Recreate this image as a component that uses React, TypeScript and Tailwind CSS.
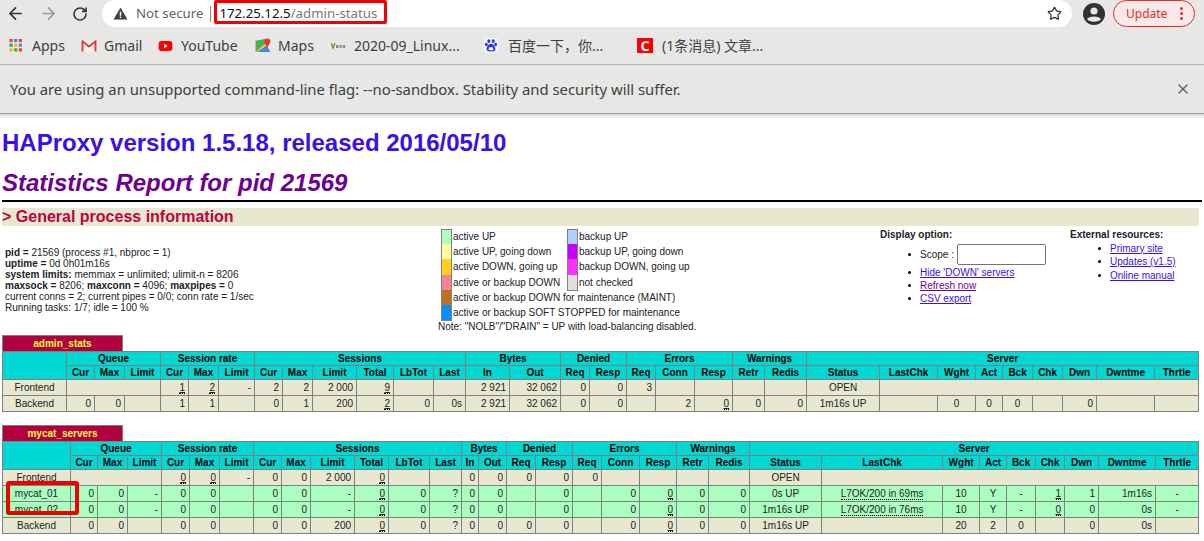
import { ArrowLeft, ArrowRight, RotateCw, Star, X } from 'lucide-react'

type Cell = string | { span: number }

const widths1 = [64, 28, 30, 36, 28, 30, 36, 28, 30, 44, 37, 40, 32, 44, 51, 29, 37, 29, 39, 38, 32, 42, 73, 58, 38, 27, 30, 30, 34, 58, 44]
const widths2 = [68, 27, 30, 34, 28, 30, 34, 28, 29, 44, 34, 41, 32, 17, 28, 29, 37, 29, 38, 37, 32, 41, 72, 121, 37, 27, 29, 29, 34, 57, 43]

const groups = [
  ['Queue', 3],
  ['Session rate', 3],
  ['Sessions', 6],
  ['Bytes', 2],
  ['Denied', 2],
  ['Errors', 3],
  ['Warnings', 2],
  ['Server', 9],
] as const

const headers = ['Cur', 'Max', 'Limit', 'Cur', 'Max', 'Limit', 'Cur', 'Max', 'Limit', 'Total', 'LbTot', 'Last', 'In', 'Out', 'Req', 'Resp', 'Req', 'Conn', 'Resp', 'Retr', 'Redis', 'Status', 'LastChk', 'Wght', 'Act', 'Bck', 'Chk', 'Dwn', 'Dwntme', 'Thrtle']

// "_" prefix = value with a tooltip (underlined in the page), "~" = dotted only
const adminRows: { cells: Cell[]; up?: boolean }[] = [
  { cells: ['Frontend', { span: 3 }, '_1', '_2', '-', '2', '2', '2 000', '_9', '', '', '2 921', '32 062', '0', '0', '3', '', '', '', '', 'OPEN', { span: 8 }] },
  { cells: ['Backend', '0', '0', '', '1', '1', '', '0', '1', '200', '_2', '0', '0s', '2 921', '32 062', '0', '0', '', '2', '_0', '0', '0', '1m16s UP', '', '0', '0', '0', '', '0', '', ''] },
]

const mycatRows: { cells: Cell[]; up?: boolean }[] = [
  { cells: ['Frontend', { span: 3 }, '_0', '_0', '-', '0', '0', '2 000', '_0', '', '', '0', '0', '0', '0', '0', '', '', '', '', 'OPEN', { span: 8 }] },
  { up: true, cells: ['mycat_01', '0', '0', '-', '0', '0', '', '0', '0', '-', '_0', '0', '?', '0', '0', '', '0', '', '0', '_0', '0', '0', '0s UP', '~L7OK/200 in 69ms', '10', 'Y', '-', '_1', '1', '1m16s', '-'] },
  { up: true, cells: ['mycat_02', '0', '0', '-', '0', '0', '', '0', '0', '-', '_0', '0', '?', '0', '0', '', '0', '', '0', '_0', '0', '0', '1m16s UP', '~L7OK/200 in 76ms', '10', 'Y', '-', '_0', '0', '0s', '-'] },
  { cells: ['Backend', '0', '0', '', '0', '0', '', '0', '0', '200', '_0', '0', '?', '0', '0', '0', '0', '', '0', '_0', '0', '0', '1m16s UP', '', '20', '2', '0', '', '0', '0s', ''] },
]

const centered = new Set([0, 22, 23, 24, 25, 26, 30])

function Value({ text }: { text: string }) {
  if (text.startsWith('_')) {
    return <span className="underline border-b border-dotted border-black">{text.slice(1)}</span>
  }
  if (text.startsWith('~')) {
    return <span className="border-b border-dotted border-black">{text.slice(1)}</span>
  }
  return <>{text}</>
}

function StatsTable({ title, widths, rows, gap }: { title: string; widths: number[]; rows: { cells: Cell[]; up?: boolean }[]; gap: string }) {
  const thClass = 'h-[14px] p-0 border border-[#808080] text-center font-bold leading-[12px] text-black'
  return (
    <div className={gap}>
      <div className="w-[121px] h-[16px] ml-0 bg-[#b00040] border border-b-0 border-[#808080] text-[#ffff40] font-bold text-center leading-[15px]">{title}</div>
      <table className="table-fixed border-collapse w-[1197px] bg-[#e8e8d0] ml-0">
        <colgroup>
          {widths.map((w, i) => (
            <col key={i} style={{ width: w }} />
          ))}
        </colgroup>
        <thead className="bg-[#00d8d4]">
          <tr>
            <th rowSpan={2} className={thClass} />
            {groups.map(([name, span], i) => (
              <th key={i} colSpan={span} className={thClass}>{name}</th>
            ))}
          </tr>
          <tr>
            {headers.map((h, i) => (
              <th key={i} className={thClass}>{h}</th>
            ))}
          </tr>
        </thead>
        <tbody>
          {rows.map((row, r) => {
            let col = 0
            return (
              <tr key={r} className={row.up ? 'bg-[#aaffc0]' : ''}>
                {row.cells.map((cell, c) => {
                  if (typeof cell !== 'string') {
                    col += cell.span
                    return <td key={c} colSpan={cell.span} className="h-[16px] p-0 border border-[#808080]" />
                  }
                  const center = centered.has(col)
                  col += 1
                  return (
                    <td
                      key={c}
                      className={`h-[16px] py-0 px-[3px] border border-[#808080] leading-[12px] text-[#222] whitespace-nowrap overflow-visible ${center ? 'text-center' : 'text-right'}`}
                    >
                      <Value text={cell} />
                    </td>
                  )
                })}
              </tr>
            )
          })}
        </tbody>
      </table>
    </div>
  )
}

function Swatch({ color, first, last }: { color: string; first?: boolean; last?: boolean }) {
  return (
    <span className={`w-[9px] h-full shrink-0 box-content border-x border-[#808080] ${first ? 'border-t' : ''} ${last ? 'border-b' : ''} ${color}`} />
  )
}

function Legend() {
  const rows = [
    { c: 'bg-[#aaffc0]', t: 'active UP', c2: 'bg-[#b0d0ff]', t2: 'backup UP' },
    { c: 'bg-[#ffffa0]', t: 'active UP, going down', c2: 'bg-[#c800ff]', t2: 'backup UP, going down' },
    { c: 'bg-[#ffd020]', t: 'active DOWN, going up', c2: 'bg-[#ff30ff]', t2: 'backup DOWN, going up' },
    { c: 'bg-[#ff8090]', t: 'active or backup DOWN', c2: 'bg-[#e0e0e0]', t2: 'not checked' },
    { c: 'bg-[#c07020]', t: 'active or backup DOWN for maintenance (MAINT)' },
    { c: 'bg-[#0090ff]', t: 'active or backup SOFT STOPPED for maintenance' },
  ]
  return (
    <div className="w-[442px] pt-[3px]">
      {rows.map((r, i) => (
        <div key={i} className="flex h-[15.2px] ml-[3px] items-stretch">
          <Swatch color={r.c} first={i === 0} last={i === 5} />
          <span className={`pl-[1px] leading-[16px] whitespace-nowrap ${r.t2 ? 'w-[115px]' : ''}`}>{r.t}</span>
          {r.t2 && <Swatch color={r.c2} first={i === 0} last={i === 3} />}
          {r.t2 && <span className="pl-[1px] leading-[16px] whitespace-nowrap">{r.t2}</span>}
        </div>
      ))}
      <div className="leading-[12px] mt-[1px]">Note: "NOLB"/"DRAIN" = UP with load-balancing disabled.</div>
    </div>
  )
}

function Bullet({ children, className }: { children: React.ReactNode; className?: string }) {
  return (
    <li className={`flex items-center ${className ?? ''}`}>
      <span className="w-[3px] h-[3px] rounded-full bg-black -ml-[12px] mr-[9px] shrink-0" />
      {children}
    </li>
  )
}

function Toolbar() {
  return (
    <div className="h-[27px] flex items-center bg-[#e7e7e6]">
      <div className="w-[102px] flex items-center pl-[6px] gap-[10px] text-[#3c4043]">
        <ArrowLeft size={19} strokeWidth={2.2} className="text-[#333]" />
        <ArrowRight size={19} strokeWidth={2.2} className="text-[#9a9a9a] ml-[4px]" />
        <RotateCw size={16} strokeWidth={2.4} className="text-[#333] ml-[4px]" />
      </div>
      <div className="relative w-[970px] h-[27px] bg-white rounded-full flex items-center">
        <svg width="15" height="13" viewBox="0 0 16 14" className="ml-[11px]">
          <path d="M8 0.5 L15.5 13.5 H0.5 Z" fill="#3c4043" />
          <rect x="7.2" y="5" width="1.6" height="4.5" fill="#fff" />
          <rect x="7.2" y="10.3" width="1.6" height="1.6" fill="#fff" />
        </svg>
        <span className="ml-[8px] text-[13.25px] text-[#5f6368]">Not secure</span>
        <span className="ml-[7px] w-px h-[16px] bg-[#888]" />
        <span className="ml-[8px] text-[13.25px] text-[#111]">172.25.12.5<span className="text-[#777]">/admin-status</span></span>
        <div className="absolute left-[112px] top-0 w-[173px] h-[24px] border-[3px] border-[#f00000] rounded-[2px]" />
        <Star size={15} strokeWidth={2} className="absolute right-[10px] text-[#333]" />
      </div>
      <svg width="22" height="22" viewBox="0 0 22 22" className="ml-[11px]">
        <circle cx="11" cy="11" r="11" fill="#2f3337" />
        <circle cx="11" cy="8" r="3.6" fill="#e7e7e6" />
        <path d="M4 16 C6 12.6 16 12.6 18 16 C16 19.5 6 19.5 4 16 Z" fill="#e7e7e6" />
      </svg>
      <div className="ml-[8px] w-[82px] h-[27px] rounded-full border border-[#d93025] bg-[#fae9e8] flex items-center text-[12px] text-[#d93025] pl-[12px]">
        Update
        <span className="ml-auto mr-[11px] flex flex-col gap-[2px]">
          <span className="w-[3px] h-[3px] rounded-full bg-[#d93025]" />
          <span className="w-[3px] h-[3px] rounded-full bg-[#d93025]" />
          <span className="w-[3px] h-[3px] rounded-full bg-[#d93025]" />
        </span>
      </div>
    </div>
  )
}

function AppsIcon() {
  const colors = ['#ea4335', '#4285f4', '#ea4335', '#34a853', '#fbbc05', '#4285f4', '#fbbc05', '#34a853', '#ea4335']
  return (
    <svg width="14" height="13" viewBox="0 0 14 14">
      {colors.map((c, i) => (
        <rect key={i} x={(i % 3) * 5} y={Math.floor(i / 3) * 5} width="3.4" height="3.4" fill={c} />
      ))}
    </svg>
  )
}

function GmailIcon() {
  return (
    <svg width="16" height="12" viewBox="0 0 16 13">
      <rect x="0.5" y="1" width="15" height="11.5" fill="#f4f4f4" />
      <path d="M1 12.5 V1.5 L8 7 L15 1.5 V12.5" fill="none" stroke="#e8362d" strokeWidth="2" />
    </svg>
  )
}

function YoutubeIcon() {
  return (
    <svg width="15" height="10" viewBox="0 0 15 11">
      <rect width="15" height="11" rx="3" fill="#f00" />
      <path d="M6 3 L10 5.5 L6 8 Z" fill="#fff" />
    </svg>
  )
}

function MapsIcon() {
  return (
    <svg width="16" height="15" viewBox="0 0 16 16">
      <path d="M0 3 L10 1 V15 L0 15 Z" fill="#4caf50" />
      <path d="M0 15 L10 6 V15 Z" fill="#fbc02d" />
      <path d="M2 15 L12 8 L16 15 Z" fill="#4285f4" />
      <circle cx="12.5" cy="3.8" r="3.3" fill="#e53935" />
      <path d="M10 5.5 L12.5 11 L15 5.5 Z" fill="#e53935" />
    </svg>
  )
}

function VimIcon() {
  return (
    <svg width="14" height="8" viewBox="0 0 14 8">
      <path d="M0 1 L2 6 L4 1" fill="none" stroke="#6f8f4f" strokeWidth="1.4" />
      <rect x="5" y="3" width="2.5" height="3" fill="#888" />
      <rect x="8.5" y="3" width="2.5" height="3" fill="#999" />
      <rect x="12" y="3" width="2" height="3" fill="#888" />
    </svg>
  )
}

function BaiduIcon() {
  return (
    <svg width="16" height="15" viewBox="0 0 16 17">
      <rect width="16" height="17" rx="2" fill="#f3f3fb" />
      <ellipse cx="5.5" cy="3.5" rx="1.7" ry="2.2" fill="#2932e1" />
      <ellipse cx="10.5" cy="3.5" rx="1.7" ry="2.2" fill="#2932e1" />
      <ellipse cx="2.7" cy="7.3" rx="1.6" ry="2" fill="#2932e1" />
      <ellipse cx="13.3" cy="7.3" rx="1.6" ry="2" fill="#2932e1" />
      <path d="M8 6.5 C5.5 6.5 3 10 3 12.5 C3 15 5.5 15.5 8 15 C10.5 15.5 13 15 13 12.5 C13 10 10.5 6.5 8 6.5 Z" fill="#2932e1" />
      <rect x="5.5" y="10.5" width="5" height="3.5" rx="1" fill="#fff" />
    </svg>
  )
}

function Bookmarks() {
  const items = [
    { w: 'w-[72px]', icon: <AppsIcon />, gap: 'w-[23px]', text: 'Apps' },
    { w: 'w-[77px]', icon: <GmailIcon />, gap: 'w-[23px]', text: 'Gmail' },
    { w: 'w-[97px]', icon: <YoutubeIcon />, gap: 'w-[23px]', text: 'YouTube' },
    { w: 'w-[76px]', icon: <MapsIcon />, gap: 'w-[23px]', text: 'Maps' },
    { w: 'w-[152px]', icon: <VimIcon />, gap: 'w-[23px]', text: '2020-09_Linux...' },
    { w: 'w-[154px]', icon: <BaiduIcon />, gap: 'w-[25px]', text: '百度一下，你...' },
    { w: 'w-[200px]', icon: <span className="w-[16px] h-[15px] bg-[#f00] text-white font-bold text-[14px] leading-[15px] text-center">C</span>, gap: 'w-[25px]', text: '(1条消息) 文章...' },
  ]
  return (
    <div className="h-[38px] pl-[9px] flex items-center bg-[#e7e7e6] border-b border-[#b4b4b4] text-[14px] text-[#3c4043]">
      {items.map((it) => (
        <div key={it.text} className={`${it.w} flex items-center shrink-0`}>
          <span className={`${it.gap} shrink-0 flex items-center`}>{it.icon}</span>
          <span className="whitespace-nowrap">{it.text}</span>
        </div>
      ))}
    </div>
  )
}

function Infobar() {
  return (
    <div className="h-[49px] pl-[10px] pr-[13px] flex items-center justify-between bg-[#e7e7e6] border-b border-[#9a9a9a] text-[14.85px] text-[#3c4043]">
      <span>You are using an unsupported command-line flag: --no-sandbox. Stability and security will suffer.</span>
      <X size={16} strokeWidth={2} className="text-[#5f6368]" />
    </div>
  )
}

export default function App() {
  return (
    <div className="w-[1204px] h-[541px] overflow-hidden bg-white font-['Liberation_Sans',sans-serif] text-[10px] text-[#222]">
      <div className="font-['Noto_Sans','Noto_Sans_CJK_SC',sans-serif]">
        <Toolbar />
        <Bookmarks />
        <Infobar />
      </div>
      <div className="h-[5px] bg-gradient-to-b from-[#d8d8d8] to-white" />

      <div className="px-[2px]">
        <h1 className="mt-[10px] text-[24px] leading-[28px] font-bold text-[#3a0fe8]">HAProxy version 1.5.18, released 2016/05/10</h1>
        <h2 className="mt-[12px] text-[24px] leading-[28px] font-bold italic text-[#6c0090]">Statistics Report for pid 21569</h2>
        <div className="mt-[3px] h-[2px] bg-black" />
        <h3 className="mt-[6px] h-[18px] w-[1197px] bg-[#e8e8d0] text-[16px] leading-[18px] font-bold text-[#c00040]">&gt; General process information</h3>

        <div className="flex h-[109px]">
          <div className="w-[436px] pl-[3px] pt-[21px] leading-[11px] text-[#222] whitespace-nowrap">
            <div><b>pid = </b>21569 (process #1, nbproc = 1)</div>
            <div><b>uptime = </b>0d 0h01m16s</div>
            <div><b>system limits:</b> memmax = unlimited; ulimit-n = 8206</div>
            <div><b>maxsock = </b>8206; <b>maxconn = </b>4096; <b>maxpipes = </b>0</div>
            <div>current conns = 2; current pipes = 0/0; conn rate = 1/sec</div>
            <div>Running tasks: 1/7; idle = 100 %</div>
          </div>

          <Legend />

          <div className="w-[190px] pt-[3px]">
            <b className="block leading-[12px]">Display option:</b>
            <ul className="pl-[40px] mt-[3px] text-[#3a0fee]">
              <Bullet className="h-[21px] text-[#222]">
                Scope :
                <span className="ml-[3px] w-[89px] h-[21px] bg-white border border-[#767676] rounded-[2px]" />
              </Bullet>
              <Bullet className="h-[14px]"><a className="underline">Hide 'DOWN' servers</a></Bullet>
              <Bullet className="h-[13px]"><a className="underline text-[#6c0090]">Refresh now</a></Bullet>
              <Bullet className="h-[13px]"><a className="underline">CSV export</a></Bullet>
            </ul>
          </div>

          <div className="pt-[3px]">
            <b className="block leading-[12px]">External resources:</b>
            <ul className="pl-[40px] text-[#3a0fee]">
              <Bullet className="h-[14px]"><a className="underline">Primary site</a></Bullet>
              <Bullet className="h-[13px]"><a className="underline">Updates (v1.5)</a></Bullet>
              <Bullet className="h-[14px]"><a className="underline">Online manual</a></Bullet>
            </ul>
          </div>
        </div>

        <StatsTable title="admin_stats" widths={widths1} rows={adminRows} gap="" />
        <div className="relative">
          <StatsTable title="mycat_servers" widths={widths2} rows={mycatRows} gap="mt-[13px]" />
          <div className="absolute left-[4px] top-[56px] w-[73px] h-[34px] border-[4px] border-[#f00000] rounded-[3px]" />
        </div>
      </div>
    </div>
  )
}
